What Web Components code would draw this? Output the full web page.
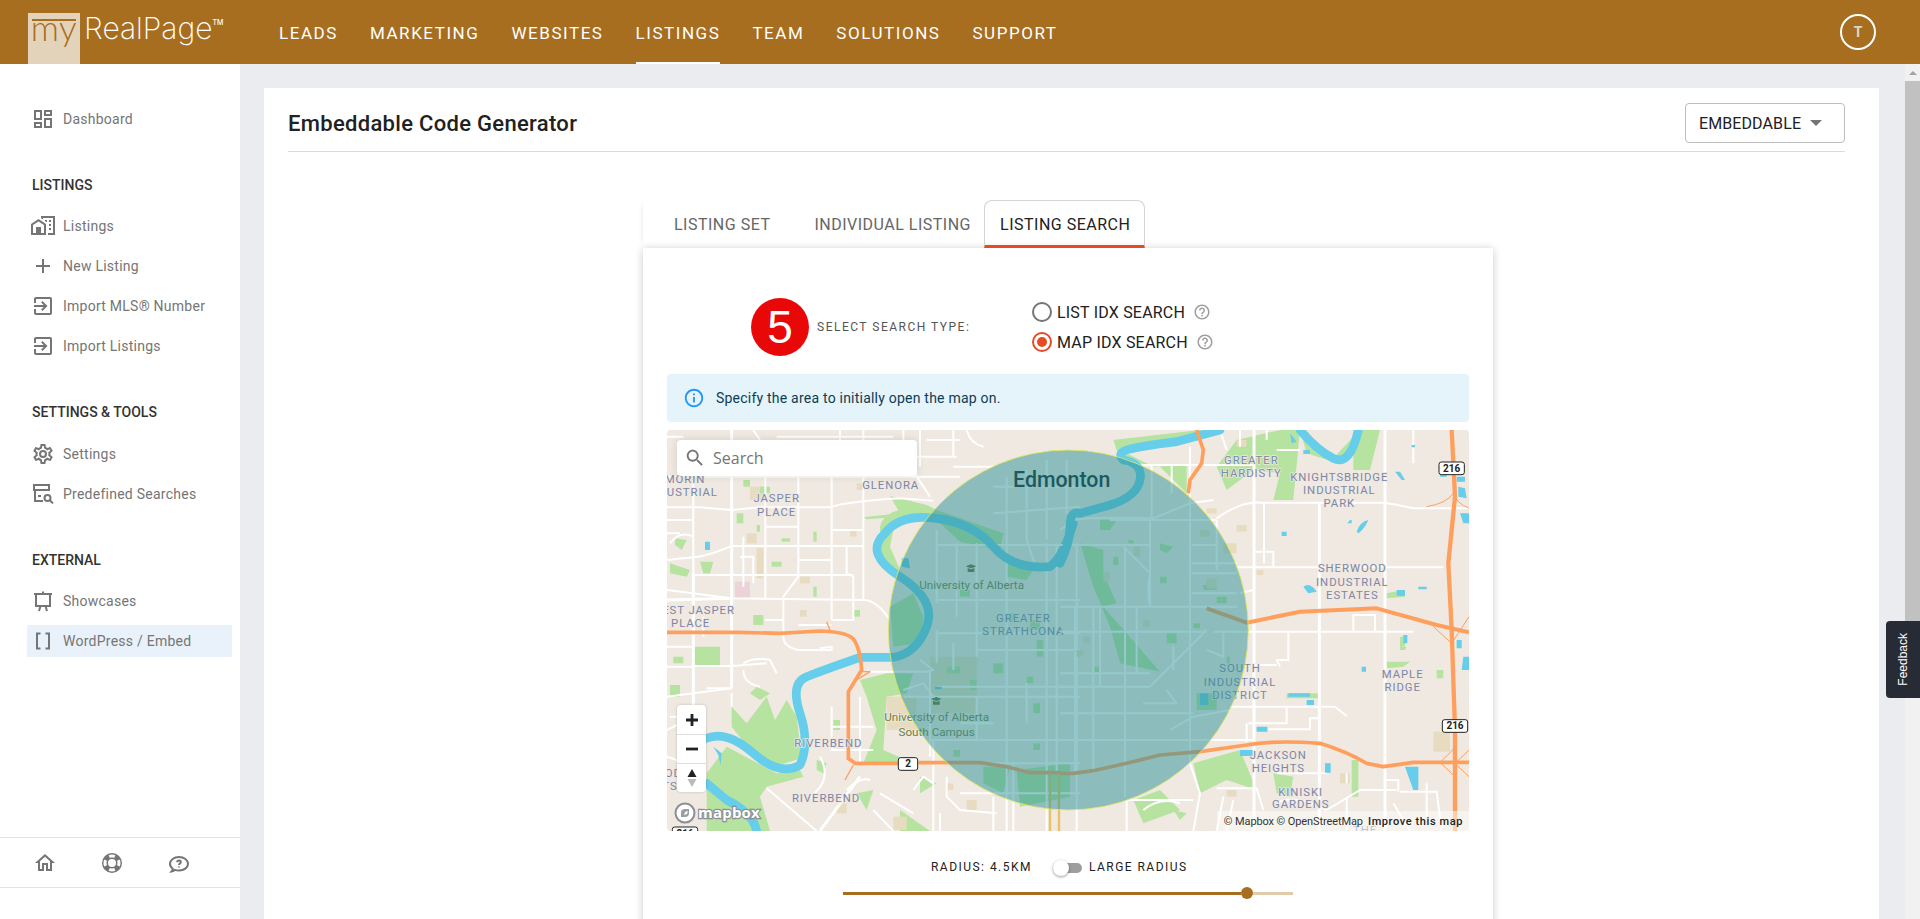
<!DOCTYPE html>
<html>
<head>
<meta charset="utf-8">
<title>Embeddable Code Generator</title>
<style>
  html, body { margin: 0; height: 919px; overflow: hidden; }
  body { font-family: Roboto, "Liberation Sans", sans-serif; background: #ebecf0; }
  app-shell { height: 919px; }
</style>
</head>
<body>
<app-shell></app-shell>
<script>
const ICONS = {
    dashboard: 'M19 5v2h-4V5h4M9 5v6H5V5h4m10 8v6h-4v-6h4M9 17v2H5v-2h4M21 3h-8v6h8V3zM11 3H3v10h8V3zm10 8h-8v10h8V11zm-10 4H3v6h8v-6z',
    city: 'M10,2V4.26L12,5.59V4H22V19H17V21H24V2H10M7.5,5L0,10V21H15V10L7.5,5M14,6V6.93L15.61,8H16V6H14M18,6V8H20V6H18M7.5,7.5L13,11V19H10V13H5V19H2V11L7.5,7.5M18,10V12H20V10H18M18,14V16H20V14H18Z',
    plus: 'M19 13h-6v6h-2v-6H5v-2h6V5h2v6h6v2z',
    login: 'M10.09 15.59L11.5 17l5-5-5-5-1.41 1.41L12.67 11H3v2h9.67l-2.58 2.59zM19 3H5c-1.11 0-2 .9-2 2v4h2V5h14v14H5v-4H3v4c0 1.1.89 2 2 2h14c1.1 0 2-.9 2-2V5c0-1.1-.9-2-2-2z',
    cog: 'M12,8A4,4 0 0,1 16,12A4,4 0 0,1 12,16A4,4 0 0,1 8,12A4,4 0 0,1 12,8M12,10A2,2 0 0,0 10,12A2,2 0 0,0 12,14A2,2 0 0,0 14,12A2,2 0 0,0 12,10M10,22C9.75,22 9.54,21.82 9.5,21.58L9.13,18.93C8.5,18.68 7.96,18.34 7.44,17.94L4.95,18.95C4.73,19.03 4.46,18.95 4.34,18.73L2.34,15.27C2.21,15.05 2.27,14.78 2.46,14.63L4.57,12.97L4.5,12L4.57,11L2.46,9.37C2.27,9.22 2.21,8.95 2.34,8.73L4.34,5.27C4.46,5.05 4.73,4.96 4.95,5.05L7.44,6.05C7.96,5.66 8.5,5.32 9.13,5.07L9.5,2.42C9.54,2.18 9.75,2 10,2H14C14.25,2 14.46,2.18 14.5,2.42L14.87,5.07C15.5,5.32 16.04,5.66 16.56,6.05L19.05,5.05C19.27,4.96 19.54,5.05 19.66,5.27L21.66,8.73C21.79,8.95 21.73,9.22 21.54,9.37L19.43,11L19.5,12L19.43,13L21.54,14.66C21.73,14.81 21.79,15.08 21.66,15.3L19.66,18.76C19.54,18.98 19.27,19.06 19.05,18.98L16.56,17.98C16.04,18.37 15.5,18.71 14.87,18.96L14.5,21.61C14.46,21.85 14.25,22 14,22H10M11.25,4L10.88,6.61C9.68,6.86 8.62,7.5 7.85,8.39L5.44,7.35L4.69,8.65L6.8,10.2C6.4,11.37 6.4,12.64 6.8,13.8L4.68,15.36L5.43,16.66L7.86,15.62C8.63,16.5 9.68,17.14 10.87,17.38L11.24,20H12.76L13.13,17.39C14.32,17.14 15.37,16.5 16.14,15.62L18.57,16.66L19.32,15.36L17.2,13.81C17.6,12.64 17.6,11.37 17.2,10.2L19.31,8.65L18.56,7.35L16.15,8.39C15.38,7.5 14.32,6.86 13.12,6.62L12.75,4H11.25Z',
    home: 'M12 5.69l5 4.5V18h-2v-6H9v6H7v-7.81l5-4.5M12 3L2 12h3v8h6v-6h2v6h6v-8h3L12 3z',
    buoy: 'M19.79,15.41C20.74,13.24 20.74,10.75 19.8,8.58L17.05,9.83C17.65,11.21 17.65,12.78 17.06,14.17L19.79,15.41M15.42,4.21C13.25,3.26 10.76,3.26 8.59,4.2L9.84,6.94C11.22,6.35 12.79,6.35 14.18,6.95L15.42,4.21M4.21,8.58C3.26,10.76 3.26,13.24 4.21,15.42L6.95,14.17C6.35,12.79 6.35,11.21 6.95,9.82L4.21,8.58M8.59,19.79C10.76,20.74 13.25,20.74 15.42,19.79L14.18,17.05C12.8,17.65 11.22,17.65 9.84,17.06L8.59,19.79M12,2A10,10 0 0,1 22,12A10,10 0 0,1 12,22A10,10 0 0,1 2,12A10,10 0 0,1 12,2M12,8A4,4 0 0,0 8,12A4,4 0 0,0 12,16A4,4 0 0,0 16,12A4,4 0 0,0 12,8Z',
    info: 'M11 7h2v2h-2zm0 4h2v6h-2zm1-9C6.48 2 2 6.48 2 12s4.48 10 10 10 10-4.48 10-10S17.52 2 12 2zm0 18c-4.41 0-8-3.59-8-8s3.59-8 8-8 8 3.59 8 8-3.59 8-8 8z',
    help: 'M11 18h2v-2h-2v2zm1-16C6.48 2 2 6.48 2 12s4.48 10 10 10 10-4.48 10-10S17.52 2 12 2zm0 18c-4.41 0-8-3.59-8-8s3.59-8 8-8 8 3.59 8 8-3.59 8-8 8zm0-14c-2.21 0-4 1.79-4 4h2c0-1.1.9-2 2-2s2 .9 2 2c0 2-3 1.75-3 5h2c0-2.25 3-2.5 3-5 0-2.21-1.79-4-4-4z'
};
const STROKED = {
    search: '<rect x="3" y="3" width="15" height="5"/><path d="M4 8v11h8M7 14h3"/><circle cx="16.5" cy="16" r="3"/><path d="M18.8 18.2l3.2 3.2"/>',
    board: '<path d="M3 5h18M5 5v12h14V5M12 2.5V5M9.5 17L8 22M14.5 17L16 22"/>',
    brackets: '<path d="M9.5 4.5H6v15h3.5M14.5 4.5H18v15h-3.5"/>',
    chat: '<path d="M4.6 20.5c1.6-.2 2.6-.8 3.3-1.6 1.2.5 2.6.7 4.1.7 5 0 9-2.9 9-6.8S17 6 12 6 3 8.9 3 12.8c0 2 1.1 3.8 2.8 5 0 1-.5 1.9-1.2 2.7z"/><path d="M10.2 11.2c0-1 .8-1.7 1.8-1.7s1.8.7 1.8 1.6c0 1.4-1.8 1.4-1.8 2.9M12 15.6v1"/>'
};

function icon(name, size = 24, color = '#757575') {
    if (STROKED[name]) {
        return `<svg width="${size}" height="${size}" viewBox="0 0 24 24" fill="none" stroke="${color}" stroke-width="2">${STROKED[name]}</svg>`;
    }
    return `<svg width="${size}" height="${size}" viewBox="0 0 24 24"><path fill="${color}" d="${ICONS[name]}"/></svg>`;
}

class AppHeader extends HTMLElement {
    constructor() {
        super();
        this.attachShadow({ mode: 'open' });
    }
    connectedCallback() {
        const links = ['Leads', 'Marketing', 'Websites', 'Listings', 'Team', 'Solutions', 'Support'];
        this.shadowRoot.innerHTML = `
            <style>
                :host { display: flex; height: 64px; background: #a86e20; color: #fff; align-items: stretch; padding-left: 28px; padding-right: 44px; flex: none; }
                .logo { display: flex; align-items: flex-start; width: 251px; flex: none; }
                .my { width: 52px; height: 51px; margin-top: 13px; background: #e4d3bb; color: #a86e20; font: 300 35px/1 Lato, sans-serif; text-align: center; flex: none; overflow: hidden; }
                .my span { display: block; margin-top: -11px; letter-spacing: .5px; }
                .my i { display: block; height: 2px; background: #a86e20; margin: 6px 4px 0; }
                .real { font: 200 30px/1 Inter, sans-serif; margin-left: 4px; margin-top: 13px; white-space: nowrap; }
                .real sup { font-size: 7px; font-weight: 500; vertical-align: 14px; line-height: 0; margin-left: 0; }
                nav { display: flex; gap: 32px; }
                a { display: flex; align-items: center; height: 64px; box-sizing: border-box; padding-top: 2px; font: 400 17px Roboto, sans-serif; letter-spacing: 1.55px; text-transform: uppercase; color: #fff; }
                a.on { border-bottom: 2px solid #fff; padding-top: 4px; }
                .avatar { margin-left: auto; align-self: center; width: 36px; height: 36px; box-sizing: border-box; border: 2px solid #fff; border-radius: 50%; display: flex; align-items: center; justify-content: center; font: 700 14px Roboto, sans-serif; color: #dcd6ce; }
            </style>
            <div class="logo">
                <div class="my"><i></i><span>my</span></div>
                <div class="real">RealPage<sup>TM</sup></div>
            </div>
            <nav>${links.map(l => `<a class="${l === 'Listings' ? 'on' : ''}">${l}</a>`).join('')}</nav>
            <div class="avatar">T</div>
        `;
    }
}

class SideItem extends HTMLElement {
    constructor() {
        super();
        this.attachShadow({ mode: 'open' });
    }
    connectedCallback() {
        this.shadowRoot.innerHTML = `
            <style>
                :host { display: flex; align-items: center; height: 32px; margin: 0 8px 8px 27px; padding-left: 4px; gap: 8px; font: 450 14px Roboto, sans-serif; letter-spacing: .25px; color: #757575; }
                :host([active]) { background: #e9f2fa; }
                svg { display: block; flex: none; }
            </style>
            ${icon(this.getAttribute('icon'))}<slot></slot>
        `;
    }
}

class SideHeading extends HTMLElement {
    constructor() {
        super();
        this.attachShadow({ mode: 'open' }).innerHTML = `
            <style>
                :host { display: block; height: 20px; margin: 40px 0 15px 32px; font: 500 14px/20px Roboto, sans-serif; color: #333; }
                :host([roomy]) { margin-bottom: 16px; }
            </style>
            <slot></slot>
        `;
    }
}

class SideBar extends HTMLElement {
    constructor() {
        super();
        this.attachShadow({ mode: 'open' });
    }
    connectedCallback() {
        this.shadowRoot.innerHTML = `
            <style>
                :host { display: flex; flex-direction: column; width: 240px; flex: none; background: #fff; box-sizing: border-box; padding-top: 39px; }
                .links { flex: 1; }
                footer { display: grid; grid-template-columns: repeat(3, 67px); height: 49px; margin-bottom: 31px; padding-left: 11px; border-top: 1px solid #e3e3e3; border-bottom: 1px solid #e3e3e3; align-items: center; justify-items: center; }
                svg { display: block; }
            </style>
            <div class="links"><slot></slot></div>
            <footer>${icon('home', 24)}${icon('buoy', 24)}${icon('chat', 24)}</footer>
        `;
    }
}

class FakeScrollbar extends HTMLElement {
    constructor() {
        super();
        this.attachShadow({ mode: 'open' }).innerHTML = `
            <style>
                :host { display: flex; flex-direction: column; width: 15px; flex: none; background: #f1f1f1; }
                .arrow { height: 17px; display: flex; align-items: center; justify-content: center; flex: none; }
                .arrow i { border: 4px solid transparent; border-top: 0; border-bottom: 4px solid #a3a3a3; }
                .thumb { height: 560px; background: #c1c1c1; }
            </style>
            <div class="arrow"><i></i></div>
            <div class="thumb"></div>
        `;
    }
}

class FeedbackTab extends HTMLElement {
    constructor() {
        super();
        this.attachShadow({ mode: 'open' }).innerHTML = `
            <style>
                :host { position: fixed; right: 0; top: 621px; width: 34px; height: 77px; background: #262b36; border-radius: 4px 0 0 4px; color: #fff; display: flex; align-items: center; justify-content: center; }
                span { writing-mode: vertical-rl; transform: rotate(180deg); font: 500 12px "Liberation Sans", sans-serif; }
            </style>
            <span>Feedback</span>
        `;
    }
}

class TabBar extends HTMLElement {
    constructor() {
        super();
        this.attachShadow({ mode: 'open' }).innerHTML = `
            <style>
                :host { display: flex; height: 48px; padding-left: 16px; box-sizing: border-box; box-shadow: -4px 0 6px -6px rgba(0,0,0,.25); }
                div { display: flex; align-items: center; padding: 0 15px; font: 450 16px Roboto, sans-serif; letter-spacing: .5px; color: #666; white-space: nowrap; box-sizing: border-box; }
                .one { margin-right: 14px; }
                .on { color: #212121; border: 1px solid #d4d4d4; border-bottom: 3px solid #e64a24; border-radius: 8px 8px 0 0; margin-left: -2px; padding-top: 2px; padding-right: 14px; }
            </style>
            <div class="one">LISTING SET</div>
            <div>INDIVIDUAL LISTING</div>
            <div class="on">LISTING SEARCH</div>
        `;
    }
}

class RadioOption extends HTMLElement {
    constructor() {
        super();
        this.attachShadow({ mode: 'open' });
    }
    connectedCallback() {
        const on = this.hasAttribute('checked');
        this.shadowRoot.innerHTML = `
            <style>
                :host { display: flex; align-items: center; height: 30px; font: 450 16px Roboto, sans-serif; letter-spacing: .2px; color: #212121; }
                .dot { width: 20px; height: 20px; box-sizing: border-box; border-radius: 50%; border: 2px solid ${on ? '#e64a24' : '#757575'}; display: flex; align-items: center; justify-content: center; margin-right: 5px; }
                .dot i { width: 10px; height: 10px; border-radius: 50%; background: #e64a24; }
                svg { display: block; margin-left: 8px; }
            </style>
            <span class="dot">${on ? '<i></i>' : ''}</span><slot></slot>${icon('help', 18, '#9e9e9e')}
        `;
    }
}

class SearchType extends HTMLElement {
    constructor() {
        super();
        this.attachShadow({ mode: 'open' }).innerHTML = `
            <style>
                :host { display: flex; align-items: center; height: 60px; padding-left: 84px; }
                .step { width: 58px; height: 58px; border-radius: 50%; background: #e90808; color: #fff; font: 400 46px/58px "Liberation Sans", sans-serif; text-align: center; flex: none; }
                .label { width: 215px; margin-left: 8px; font: 450 12px Roboto, sans-serif; letter-spacing: 1.5px; color: #555; flex: none; }
            </style>
            <div class="step">5</div>
            <div class="label">SELECT SEARCH TYPE:</div>
            <div class="opts"><slot></slot></div>
        `;
    }
}

class InfoAlert extends HTMLElement {
    constructor() {
        super();
        this.attachShadow({ mode: 'open' }).innerHTML = `
            <style>
                :host { display: flex; align-items: center; height: 48px; background: #e5f3fb; border-radius: 4px; padding-left: 16px; gap: 11px; font: 450 14px Roboto, sans-serif; color: #0d3c55; letter-spacing: .22px; margin-top: 17px; }
                svg { display: block; }
            </style>
            ${icon('info', 22, '#2196f3')}<slot></slot>
        `;
    }
}

// map is drawn in the coordinates of a 3x crop, x 660.. for the west half, x 1060.. for the east half
const WEST_PARKS = [
    'M660 290Q670 250 720 240L800 250 830 240 1030 310 1020 360 900 335 830 270 760 270 700 300 690 350 720 420 680 420 660 360Z',
    'M520 212L610 262 720 250 690 198 800 225 830 240 790 260 700 262 620 268 570 240Z',
    'M690 530L760 490 790 560 780 640 700 650Z',
    'M600 750L680 730 760 730 740 790 680 800 670 960 740 990 780 1000 610 1000 650 900 620 800Z',
    'M215 830L260 880 320 800 345 870 380 810 410 860 425 985 340 1010 270 960 215 890Z',
    'M140 1030L200 950 350 1030 420 1020 430 1040 320 1070 300 1100 330 1203H140Z',
    'M100 650H180V710H100ZM30 400L90 420 80 440 30 430ZM120 395L160 395 150 430 130 430ZM45 325L80 330 65 360 45 345ZM30 765H60V800H30ZM40 680H70V700H40ZM720 1140L810 1203H720ZM290 770L330 790 300 810 270 790ZM470 990L500 1000 490 1030 470 1020ZM780 1040L830 1060 780 1090ZM590 1090L640 1080 620 1140ZM1040 380L1120 420 1100 450 1040 440ZM1070 1020L1230 1000 1230 1100 1080 1130ZM970 1010L1050 1010 1030 1090 970 1060ZM1120 820H1140V850H1120ZM880 710H900V730H880Z'
];
const WEST_TAN = [
    [810,680,140,170],[680,800,90,100],[270,170,40,40],[290,355,20,90],[260,310,30,30],[570,300,20,20],[700,1160,40,40],
    [420,540,20,20],[420,440,30,20],[590,160,20,20],[60,1150,30,30],[920,1110,30,30],[530,1120,30,30],[860,1060,20,20]
];
const WEST_GREEN = [
    [250,150,20,20],[300,170,30,20],[230,250,20,30],[290,285,10,20],[335,395,30,15],[365,325,25,10],[460,305,10,30],
    [460,470,10,30],[280,555,30,30],[580,540,20,20],[930,750,20,30],[860,710,40,20],[900,480,30,20],[1040,550,30,20],
    [1130,630,20,50],[1100,740,20,20],[880,960,20,20],[1120,940,20,20],[520,870,20,30],[1000,700,30,30],[1110,570,30,30]
];
const WEST_ROADS = [
    'M760 80H890M21 140H900M21 232H120L215 240 300 232H510Q560 215 720 205L820 212M21 390Q60 385 100 382T215 348H610',
    'M100 435H580M21 480L215 505 610 510Q650 510 690 570M370 500V620Q370 650 415 660H515V650L480 655M100 708H215L320 700',
    'M21 800L100 790 215 775M21 650H100M100 140V830M316 130V510M415 130V440L370 500M515 130V570M610 130V510',
    'M560 350V430L580 440V570H515M240 380H280V460M30 340Q60 300 100 320M760 100L770 140 810 200M250 700Q280 680 330 690L350 730',
    'M250 720Q250 760 300 770M600 800V1000M515 830V960H640M515 890H640M820 930V1203M320 1075L470 1203M760 1080L790 1040 820 1060',
    'M450 1100Q520 1050 480 980M560 1080Q600 1040 630 1050M620 725H800L820 720 780 690M730 780L790 760 820 800M21 900L60 880M21 980L80 1000',
    'M640 1140L700 1203M860 1040V1100L900 1140 1010 1150M1000 1100V1203M1060 1000V1203',
    'M830 345H1260M830 510H1260M830 610H1260M950 660H1260M830 770H1260M730 800H1260M810 930H1260M830 1000H1260M900 1090H1260',
    'M830 300V520M890 340V560M950 340V680M1040 340V1203M1160 340V1203M1190 340V1030M1250 340V1203M950 800V930M830 600V700M810 720V980',
    'M1000 170H1260M1100 120V330M1160 90V330M1220 90V250M1040 140V340M1100 330L1130 420M1000 250L1260 230',
    'M21 20H70M350 20H700M280 0L300 30M540 0V30M610 0V30M730 0V130M780 0V110M880 0V80M920 0Q930 40 970 50M800 30H900M880 110H1000',
    'M21 270H100M21 310H60M316 290H415M415 390H515M515 300H610M250 320V470M415 585H515M316 570H370M130 560V620M21 710H100M140 775H215',
    'M30 860H100M215 790V830M60 960H100M660 1090L760 1150M880 640V720M900 880H1000M1100 760V880M840 1150V1203'
];
const WEST_ROADS_MAIN = ['M215 0V640M215 640V775M480 1203L600 1040M100 430V830M21 510L215 505'];
const EAST_PARKS = [
    'M160 30L420 0 470 0 330 45 200 70 280 110 380 105 380 190 300 110 180 90Z',
    'M470 110L530 30 660 0H720L700 210H640L660 130 580 120 500 180Z',
    'M880 0H960L930 120H880ZM720 0L820 85 880 20 880 50 820 95 740 70Z',
    'M60 340L130 360 130 430 170 520 130 530 200 610 300 725 180 700 150 590 100 470Z',
    'M400 1000L540 960 590 1080 500 1050 420 1090ZM120 270L170 270 150 300 120 300ZM300 340L340 350 320 370 300 360Z',
    'M980 490L1030 480 1035 500 980 505ZM1020 650H1040L1035 660 1020 660ZM680 790H775V805H680ZM980 695H1050L1030 710 980 715ZM1130 720H1150V745H1130ZM410 790H470V840H410ZM430 465H470V480H430Z',
    'M875 990H895V1100H875ZM640 1030L700 1040 690 1100 650 1090ZM220 1110L300 1080 360 1140 250 1180ZM340 1140L380 1150 360 1170Z'
];
const EAST_TAN = [
    [420,300,30,20],[490,340,40,30],[590,420,20,15],[440,445,30,30],[220,350,20,30],[130,425,20,30],[250,570,20,20],
    [70,620,20,20],[50,660,20,20],[440,235,30,15],[530,285,30,20],[1120,905,50,60],[840,1030,30,30],[500,1080,30,20],[530,30,30,20]
];
const EAST_GREEN = [
    [470,500,30,20],[400,580,20,15],[300,440,20,20],[160,380,15,25],[320,610,30,30],[100,710,20,20],[500,680,10,20],
    [1020,620,15,30],[205,330,15,10]
];
const EAST_WATER = [
    'M1005 125L1020 125 1035 150 1025 150ZM1055 45H1065V52H1055ZM870 270H875V280H862ZM890 305Q900 275 925 270 915 295 895 310ZM665 305H680V318H665Z',
    'M730 470Q750 455 770 485L745 490ZM1075 470H1100V478H1075ZM1010 480H1035V497H1010ZM1030 615H1042V640H1030ZM905 710H918V725H905ZM685 790H750V800H685ZM740 810H762V825H740ZM590 890H622V905H590ZM540 960H578V978H540ZM795 1000H812V1028H795ZM1035 1010H1075V1080H1060Z',
    'M1190 140H1215V155H1190ZM1195 170L1215 175 1220 205 1195 200ZM1200 250H1227V280H1210ZM1190 630H1205V655H1190ZM1210 680H1227V720H1205ZM420 790H445V825H420ZM1140 130H1160V140H1140ZM690 10L710 35 695 40ZM730 60H750V72H730Z'
];
const EAST_ROADS = [
    'M200 105H580M470 265Q540 215 600 218H960Q1000 220 1060 235H1227M612 218V400M585 365H640V410M530 412H1150M460 605H1060M880 605V555H945V605M685 605V690H650L660 710',
    'M585 705H650M510 830H825L860 858M560 880V935M565 880H680V830M625 898H750V865H778M430 930H580M250 1140Q300 1100 360 1120M470 1075H590L610 1140M650 1030H800',
    'M800 1140L900 1080H1010M975 1050H1015V1085M1020 1085H1130L1145 1203M860 1030V1060M390 1000L420 1090 400 1203M200 1110H400M200 1110V1203M500 1203L520 1110M540 490L580 480',
    'M45 530V1030M100 530V1030M195 350V1100M270 270V530M390 50V1000M470 270V420M0 530H530M0 605H440M0 730H270M0 770H270M0 850H400M0 930H430',
    'M0 345H270M150 270H470M395 345H470M395 400H530M395 430H530M395 490H530M490 605V680L440 660M270 770L440 600M250 820H350L320 780M340 720V650',
    'M270 530Q260 480 270 430L190 350M0 300L40 270Q100 260 280 265L390 220 460 210M330 900L400 860 510 840M335 105V190M275 105V270M120 530V770M230 530V730',
    'M480 0L500 60M540 0V50M620 0V30M650 60H720M1060 0V100M490 1100L470 1203M650 1120Q700 1090 800 1140M860 1100V1203M1100 1060V1160M1000 1120L1050 1203'
];
const EAST_ROADS_MAIN = ['M582 0V1203M778 218V1203M975 0V1203'];

function rects(list, fill) {
    return list.map(r => `<rect x="${r[0]}" y="${r[1]}" width="${r[2]}" height="${r[3]}" fill="${fill}"/>`).join('');
}
function paths(list, attrs) {
    return list.map(d => `<path d="${d}" ${attrs}/>`).join('');
}
function label(text, x, y, cls = 'hood') {
    return `<text class="${cls}" x="${x}" y="${y}">${text}</text>`;
}
function shield(text, x, y) {
    const w = text.length > 1 ? 76 : 58;
    return `<g><rect x="${x - w / 2}" y="${y - 19}" width="${w}" height="38" rx="7" fill="#fff" stroke="#222" stroke-width="3"/><text class="shield" x="${x}" y="${y + 10}">${text}</text></g>`;
}

class MapView extends HTMLElement {
    constructor() {
        super();
        this.attachShadow({ mode: 'open' });
    }
    connectedCallback() {
        const PARK = '#b6e3a0', TAN = '#e7dcc0', WATER = '#66cdea', ROAD = '#fff', HWY = '#ff9f5e';
        const road = `fill="none" stroke="${ROAD}" stroke-width="6" stroke-linejoin="round"`;
        const main = `fill="none" stroke="${ROAD}" stroke-width="9"`;
        const hwy = `fill="none" stroke="${HWY}" stroke-linejoin="round"`;
        const river = `fill="none" stroke="${WATER}" stroke-width="26" stroke-linejoin="round" stroke-linecap="round"`;
        this.shadowRoot.innerHTML = `
            <style>
                :host { display: block; position: relative; height: 401px; margin-top: 8px; overflow: hidden; border-radius: 4px; background: #efe9e1; }
                svg.map { display: block; }
                text { font-family: Roboto, sans-serif; paint-order: stroke; stroke-linejoin: round; }
                .hood { font-size: 34px; letter-spacing: 2.8px; fill: #7d86a6; stroke: #efe9e1; stroke-width: 5px; text-anchor: middle; }
                .poi { font-size: 35px; fill: #6f7f44; stroke: #efe9e1; stroke-width: 5px; text-anchor: middle; }
                .city { font-size: 64px; font-weight: 500; fill: #0c2226; stroke: #efe9e1; stroke-width: 5px; text-anchor: middle; }
                .shield { font-size: 30px; font-weight: 700; fill: #222; text-anchor: middle; stroke: none; }
                .search { position: absolute; left: 10px; top: 10px; width: 240px; height: 36px; background: #fff; border-radius: 4px; box-shadow: 0 0 8px rgba(0,0,0,.12); display: flex; align-items: center; font: 400 16px "Open Sans", sans-serif; color: #757575; }
                .search svg { margin: 0 7px 0 7px; display: block; }
                .ctrl { position: absolute; left: 10px; top: 275px; width: 29px; background: #fff; border-radius: 4px; box-shadow: 0 0 3px rgba(0,0,0,.2); }
                .ctrl div { height: 29px; border-top: 1px solid #ddd; box-sizing: border-box; display: flex; align-items: center; justify-content: center; }
                .ctrl div:first-child { border-top: 0; }
                .logo { position: absolute; left: 7px; bottom: 7px; display: flex; align-items: center; gap: 2px; }
                .logo b { font: 700 15px "Open Sans", sans-serif; letter-spacing: .2px; color: #fff; -webkit-text-stroke: 2.4px #8a8f94; paint-order: stroke fill; line-height: 16px; margin-top: -2px; }
                .attrib { position: absolute; right: 0; bottom: 0; height: 20px; width: 252px; padding-right: 6px; box-sizing: border-box; background: rgba(255,255,255,.5); font: 400 11px Roboto, sans-serif; color: #333; display: flex; align-items: center; justify-content: flex-end; gap: 5px; white-space: nowrap; }
                .attrib span { letter-spacing: -.1px; }
                .attrib b { font-weight: 500; letter-spacing: .6px; color: #222; }
            </style>
            <svg class="map" width="802" height="401" viewBox="21 0 2406 1203">
                <g>
                    ${paths(WEST_PARKS, `fill="${PARK}"`)}
                    ${rects(WEST_TAN, TAN)}${rects(WEST_GREEN, PARK)}
                    <rect x="225" y="455" width="45" height="50" fill="#ecd3d8"/>
                    ${paths(WEST_ROADS, road)}${paths(WEST_ROADS_MAIN, main)}
                    <path d="M290 1203Q280 1150 200 1110L140 1060M140 925Q200 900 280 970T420 1005Q450 940 420 850T440 740T600 682H700Q770 670 800 590T720 440T675 310Q720 250 830 265T1000 350T1170 410Q1210 380 1240 280" ${river}/>
                    <path d="M725 385H745L750 415 725 410ZM135 335H150V360H135ZM825 770H845V778H825ZM160 950L185 970 182 1005 175 975Z" fill="${WATER}"/>
                    <path d="M21 607H230L360 610 480 603Q555 605 578 625 600 650 605 720L565 785V985L585 1000H715M775 998H960L1040 1010 1110 1028H1200" ${hwy} stroke-width="11"/>
                    <path d="M590 750L630 725H600M500 575L510 600M555 1050L580 1005M560 985L590 1005" ${hwy} stroke-width="4"/>
                    <path d="M1170 1030V1203M1197 1030V1203" fill="none" stroke="#e9c25f" stroke-width="7"/>
                    ${shield('2', 744, 1002)}${shield('216', 75, 1210)}
                    ${label('MORIN', 75, 160)}${label('INDUSTRIAL', 65, 198)}
                    ${label('JASPER', 350, 217)}${label('PLACE', 350, 257)}
                    ${label('GLENORA', 692, 177)}
                    ${label('WEST JASPER', 99, 552)}${label('PLACE', 92, 592)}
                    ${label('RIVERBEND', 505, 952)}${label('RIVERBEND', 498, 1116)}
                    ${label('OD', 40, 1042)}${label('TS', 30, 1080)}
                    ${label('University of Alberta', 935, 476, 'poi')}
                    ${label('University of Alberta', 830, 872, 'poi')}${label('South Campus', 830, 917, 'poi')}
                    ${label('GREATER', 1090, 575)}${label('STRATHCONA', 1090, 615)}
                    <path d="M933 403l14 5v2l-14 5-14-5v-2zM923 414v12h20v-12l-10 4z" fill="#66703c"/>
                    <path d="M829 801l14 5v2l-14 5-14-5v-2zM819 812v12h20v-12l-10 4z" fill="#66703c"/>
                </g>
                <g transform="translate(1200 0)">
                    ${paths(EAST_PARKS, `fill="${PARK}"`)}
                    ${rects(EAST_TAN, TAN)}${rects(EAST_GREEN, PARK)}
                    ${paths(EAST_ROADS, road)}${paths(EAST_ROADS_MAIN, main)}
                    <path d="M0 400Q30 340 30 290T60 250L150 225Q230 200 240 150T190 90Q170 70 200 60T350 35L480 0M720 0Q770 60 820 85T895 0" ${river}/>
                    ${paths(EAST_WATER, `fill="${WATER}"`)}
                    <path d="M0 1030H40L100 1022 200 1000 300 975 420 965 560 945Q640 930 780 940 860 965 920 1000L970 1010 1060 997H1227" ${hwy} stroke-width="11"/>
                    <path d="M440 535L560 578 720 545 950 535 1130 585 1227 607" ${hwy} stroke-width="12"/>
                    <path d="M1175 0L1185 200 1165 400 1175 600 1185 900V1203" ${hwy} stroke-width="13"/>
                    <path d="M385 190L390 150 425 100 430 60 410 0" ${hwy} stroke-width="11"/>
                    <path d="M1100 230Q1160 220 1180 190M1227 235Q1190 220 1180 190M1120 590L1175 640M1227 560L1175 640M1140 997Q1180 960 1185 950M1227 1040L1185 1000M1140 997L1185 1040M1227 960L1185 1000" ${hwy} stroke-width="3"/>
                    ${shield('216', 1175, 115)}${shield('216', 1185, 888)}
                    ${label('GREATER', 574, 102)}${label('HARDISTY', 574, 142)}
                    ${label('KNIGHTSBRIDGE', 838, 152)}${label('INDUSTRIAL', 838, 192)}${label('PARK', 838, 231)}
                    ${label('SHERWOOD', 877, 427)}${label('INDUSTRIAL', 877, 467)}${label('ESTATES', 877, 507)}
                    ${label('SOUTH', 540, 727)}${label('INDUSTRIAL', 540, 767)}${label('DISTRICT', 540, 807)}
                    ${label('MAPLE', 1028, 744)}${label('RIDGE', 1028, 782)}
                    ${label('JACKSON', 655, 988)}${label('HEIGHTS', 655, 1026)}
                    ${label('KINISKI', 722, 1098)}${label('GARDENS', 722, 1135)}
                    ${label('THE', 915, 1212)}
                </g>
                ${label('Edmonton', 1205, 172, 'city')}
                <circle cx="1225" cy="600" r="540" fill="#299197" fill-opacity=".5" stroke="#e4e85a" stroke-width="2.5"/>
            </svg>
            <div class="search">
                <svg width="22" height="22" viewBox="0 0 24 24"><path fill="#757575" d="M15.5 14h-.79l-.28-.27C15.41 12.59 16 11.11 16 9.5 16 5.91 13.09 3 9.5 3S3 5.91 3 9.5 5.91 16 9.5 16c1.61 0 3.09-.59 4.23-1.57l.27.28v.79l5 4.99L20.49 19l-4.99-5zm-6 0C7.01 14 5 11.99 5 9.5S7.01 5 9.5 5 14 7.01 14 9.5 11.99 14 9.5 14z"/></svg>
                Search
            </div>
            <div class="ctrl">
                <div><svg width="14" height="14" viewBox="0 0 14 14"><path fill="#222" d="M5.6 1h2.8v4.6H13v2.8H8.4V13H5.6V8.4H1V5.6h4.6z"/></svg></div>
                <div><svg width="14" height="14" viewBox="0 0 14 14"><path fill="#222" d="M1 5.6h12v2.8H1z"/></svg></div>
                <div><svg width="12" height="22" viewBox="0 0 12 22"><path fill="#222" d="M6 2l4.5 8h-9z"/><path fill="#bbb" d="M6 20l4.5-8h-9z"/></svg></div>
            </div>
            <div class="logo">
                <svg width="22" height="22" viewBox="0 0 22 22"><circle cx="11" cy="11" r="9.5" fill="#fff" stroke="#8a8f94" stroke-width="2"/><path d="M7 15V10.5Q7 7 11 7h4v4q0 4-4 4z" fill="#9a9ea2"/><path d="M10 13l1-3 3-1-1 3z" fill="#fff"/></svg>
                <b>mapbox</b>
            </div>
            <div class="attrib"><span>© Mapbox © OpenStreetMap</span><b>Improve this map</b></div>
        `;
    }
}

class RadiusControl extends HTMLElement {
    constructor() {
        super();
        this.attachShadow({ mode: 'open' }).innerHTML = `
            <style>
                :host { display: block; padding-top: 26px; font: 450 12px Roboto, sans-serif; letter-spacing: 1.47px; color: #212121; }
                .row { display: flex; align-items: center; height: 20px; padding-left: 264px; }
                .toggle { display: flex; align-items: center; width: 29px; height: 10px; margin: 1px 7px 0 21px; border-radius: 5px; background: #9e9e9e; }
                .toggle i { width: 16px; height: 16px; margin-left: 0; border-radius: 50%; background: #fff; box-shadow: 0 1px 3px rgba(0,0,0,.4); }
                .slider { display: flex; align-items: center; width: 450px; height: 12px; margin: 10px auto 0; }
                .slider .done { width: 398px; height: 3px; background: #a86e20; }
                .slider .knob { width: 12px; height: 12px; border-radius: 50%; background: #a86e20; flex: none; }
                .slider .rest { flex: 1; height: 3px; background: #e2cbab; }
            </style>
            <div class="row"><span>RADIUS: 4.5KM</span><span class="toggle"><i></i></span><span>LARGE RADIUS</span></div>
            <div class="slider"><div class="done"></div><div class="knob"></div><div class="rest"></div></div>
        `;
    }
}

class GeneratorCard extends HTMLElement {
    constructor() {
        super();
        this.attachShadow({ mode: 'open' }).innerHTML = `
            <style>
                :host { display: flex; flex-direction: column; flex: 1; min-width: 0; background: #fff; padding: 0 34px 0 24px; }
                header { display: flex; flex: none; align-items: center; justify-content: space-between; height: 63px; border-bottom: 1px solid #d5dce3; }
                h1 { margin: 7px 0 0; font: 500 22px Roboto, sans-serif; letter-spacing: .31px; color: #212121; }
                .select { width: 160px; height: 40px; margin-top: 7px; box-sizing: border-box; border: 1px solid #bdbdbd; border-radius: 4px; display: flex; align-items: center; padding-left: 13px; font: 450 16px Roboto, sans-serif; letter-spacing: .1px; color: #212121; gap: 9px; }
                .select i { border: 6px solid transparent; border-bottom: 0; border-top: 6px solid #757575; }
                .wrap { width: 850px; flex: none; margin: 48px 0 0 355px; }
                .panel { background: #fff; height: 700px; padding: 49px 24px 0; box-sizing: border-box; box-shadow: 0 1px 8px rgba(0,0,0,.22); }
            </style>
            <header><h1>Embeddable Code Generator</h1><div class="select">EMBEDDABLE<i></i></div></header>
            <div class="wrap">
                <slot name="tabs"></slot>
                <div class="panel"><slot></slot></div>
            </div>
        `;
    }
}

class AppShell extends HTMLElement {
    constructor() {
        super();
        this.attachShadow({ mode: 'open' }).innerHTML = `
            <style>
                :host { display: flex; flex-direction: column; overflow: hidden; }
                .body { display: flex; flex: 1; min-height: 0; }
                .content { display: flex; flex: 1; min-width: 0; padding: 24px 26px 0 24px; overflow: hidden; }
            </style>
            <app-header></app-header>
            <div class="body">
                <slot name="side"></slot>
                <div class="content"><slot></slot></div>
                <fake-scrollbar></fake-scrollbar>
            </div>
            <feedback-tab></feedback-tab>
        `;
    }
}

customElements.define('app-header', AppHeader);
customElements.define('side-item', SideItem);
customElements.define('side-heading', SideHeading);
customElements.define('side-bar', SideBar);
customElements.define('fake-scrollbar', FakeScrollbar);
customElements.define('feedback-tab', FeedbackTab);
customElements.define('tab-bar', TabBar);
customElements.define('radio-option', RadioOption);
customElements.define('search-type', SearchType);
customElements.define('info-alert', InfoAlert);
customElements.define('map-view', MapView);
customElements.define('radius-control', RadiusControl);
customElements.define('generator-card', GeneratorCard);
customElements.define('app-shell', AppShell);

document.querySelector('app-shell').innerHTML = `
    <side-bar slot="side">
        <side-item icon="dashboard">Dashboard</side-item>
        <side-heading>LISTINGS</side-heading>
        <side-item icon="city">Listings</side-item>
        <side-item icon="plus">New Listing</side-item>
        <side-item icon="login">Import MLS® Number</side-item>
        <side-item icon="login">Import Listings</side-item>
        <side-heading roomy>SETTINGS &amp; TOOLS</side-heading>
        <side-item icon="cog">Settings</side-item>
        <side-item icon="search">Predefined Searches</side-item>
        <side-heading>EXTERNAL</side-heading>
        <side-item icon="board">Showcases</side-item>
        <side-item icon="brackets" active>WordPress / Embed</side-item>
    </side-bar>
    <generator-card>
        <tab-bar slot="tabs"></tab-bar>
        <search-type>
            <radio-option>LIST IDX SEARCH</radio-option>
            <radio-option checked>MAP IDX SEARCH</radio-option>
        </search-type>
        <info-alert>Specify the area to initially open the map on.</info-alert>
        <map-view></map-view>
        <radius-control></radius-control>
    </generator-card>
`;
</script>
</body>
</html>
